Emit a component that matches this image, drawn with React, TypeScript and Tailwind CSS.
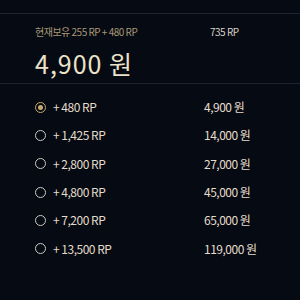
import React from 'react'

interface RpOption {
  rp: string
  price: string
}

const OPTIONS: RpOption[] = [
  { rp: '+ 480 RP', price: '4,900 원' },
  { rp: '+ 1,425 RP', price: '14,000 원' },
  { rp: '+ 2,800 RP', price: '27,000 원' },
  { rp: '+ 4,800 RP', price: '45,000 원' },
  { rp: '+ 7,200 RP', price: '65,000 원' },
  { rp: '+ 13,500 RP', price: '119,000 원' },
]

const Radio = ({ checked }: { checked: boolean }) =>
  checked ? (
    <span className="flex h-[11px] w-[11px] items-center justify-center rounded-full border border-[#c8aa6e]">
      <span className="h-[5px] w-[5px] rounded-full bg-[#c8aa6e]" />
    </span>
  ) : (
    <span className="h-[11px] w-[11px] rounded-full border border-[#cfcabf]" />
  )

export default function App() {
  const selected = 0
  return (
    <div
      className="h-[300px] w-[300px] overflow-hidden bg-[#060a13] pt-[13px]"
      style={{ fontFamily: '"Noto Sans CJK KR", "Noto Sans", sans-serif' }}
    >
      <div className="border-t border-[#1c2430]" />

      {/* current balance */}
      <div className="flex h-[69px] flex-col px-[35px] pt-[11px]">
        <div className="flex text-[10px] leading-[14px] tracking-[-0.5px]">
          <span className="w-[175px] text-[#a89876]">현재보유 255 RP + 480 RP</span>
          <span className="text-[#d8d2c4]">735 RP</span>
        </div>
        <div className="mt-[9px] text-[25px] leading-[30px] tracking-[1px] text-[#ece2c9]">
          4,900 원
        </div>
      </div>

      <div className="border-t border-[#1c2430]" />

      {/* options */}
      <div className="flex flex-col pt-[9px]">
        {OPTIONS.map((o, i) => (
          <div
            key={i}
            className="flex h-[28.3px] items-center px-[35px] text-[12px] tracking-[-0.5px] text-[#e4dccb]"
          >
            <div className="flex w-[169px] items-center gap-[7px]">
              <Radio checked={i === selected} />
              <span>{o.rp}</span>
            </div>
            <span>{o.price}</span>
          </div>
        ))}
      </div>
    </div>
  )
}
